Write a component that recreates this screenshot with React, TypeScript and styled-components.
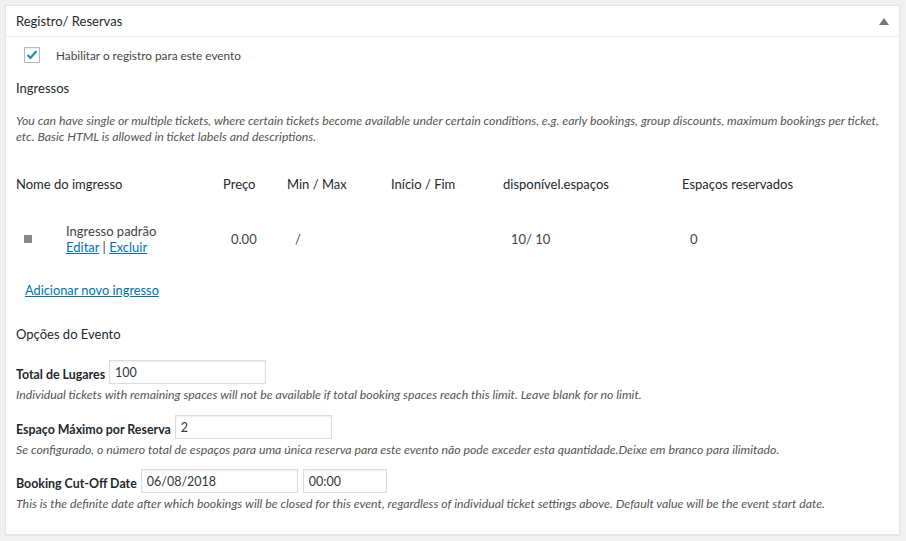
import React from 'react';
import styled, { createGlobalStyle } from 'styled-components';

const GlobalStyle = createGlobalStyle`
  html, body {
    margin: 0;
    padding: 0;
    background: #f1f1f1;
  }
  body {
    font-family: Lato, 'Liberation Sans', sans-serif;
    font-size: 13px;
    color: #444;
  }
`;

const Page = styled.div`
  padding: 5px 6px 8px 5px;
`;

const Postbox = styled.div`
  background: #fff;
  border: 1px solid #e5e5e5;
  box-shadow: 0 1px 1px rgba(0, 0, 0, 0.04);
`;

const PanelHeader = styled.div`
  height: 30px;
  display: flex;
  align-items: center;
  justify-content: space-between;
  padding: 0 10px;
  border-bottom: 1px solid #eee;
`;

const PanelTitle = styled.h2`
  margin: 0;
  font-size: 13px;
  font-weight: 400;
  color: #23282d;
`;

const Inside = styled.div`
  padding: 0 10px 22px;
`;

const CheckRow = styled.label`
  display: flex;
  align-items: center;
  margin: 10px 0 0 8px;
  height: 16px;
  font-size: 11.8px;
  color: #444;
`;

const CheckBox = styled.span`
  width: 14px;
  height: 14px;
  border: 1px solid #b4b9be;
  box-shadow: inset 0 1px 2px rgba(0, 0, 0, 0.1);
  display: flex;
  align-items: center;
  justify-content: center;
  margin-right: 16px;
`;

const SectionTitle = styled.h4<{ $top: number }>`
  margin: ${({ $top }) => $top}px 0 0;
  font-size: 13px;
  font-weight: 400;
  line-height: 20px;
  color: #23282d;
`;

const Note = styled.p<{ $top: number }>`
  margin: ${({ $top }) => $top}px 0 0;
  font-style: italic;
  font-size: 12.3px;
  line-height: 16px;
  color: #555;
`;

const TicketGrid = styled.div`
  display: grid;
  grid-template-columns: 207px 64px 104px 112px 179px 1fr;
  margin-top: 29px;
`;

const HeadCell = styled.div`
  line-height: 20px;
  color: #23282d;
  font-weight: 400;
`;

const Cell = styled.div`
  margin-top: 29px;
  padding-left: 8px;
  display: flex;
  align-items: center;
  min-height: 32px;
`;

const Swatch = styled.span`
  width: 8px;
  height: 8px;
  background: #888;
  margin-right: 34px;
  flex-shrink: 0;
`;

const TicketName = styled.div`
  line-height: 16px;
`;

const Link = styled.a`
  color: #0073aa;
  text-decoration: underline;
  cursor: pointer;
`;

const AddLink = styled(Link)`
  display: inline-block;
  margin: 26px 0 0 9px;
  font-size: 12.8px;
  line-height: 18px;
`;

const FieldRow = styled.div<{ $top: number }>`
  display: flex;
  align-items: flex-end;
  margin-top: ${({ $top }) => $top}px;
`;

const FieldLabel = styled.strong`
  line-height: 20px;
  font-size: 12.4px;
  color: #23282d;
  font-weight: 700;
  margin: 0 4px -1px 0;
`;

const TextInput = styled.input<{ $w: number }>`
  box-sizing: border-box;
  width: ${({ $w }) => $w}px;
  height: 24px;
  margin-right: 5px;
  padding: 0 5px;
  border: 1px solid #ddd;
  box-shadow: inset 0 1px 2px rgba(0, 0, 0, 0.07);
  font-family: inherit;
  font-size: 12.5px;
  color: #32373c;
  outline: none;
`;

const FieldNote = styled(Note)`
  margin-top: 3px;
`;

const columns = ['Nome do imgresso', 'Preço', 'Min / Max', 'Início / Fim', 'disponível.espaços', 'Espaços reservados'];

const App: React.FC = () => {
  return (
    <Page>
      <GlobalStyle />
      <Postbox>
        <PanelHeader>
          <PanelTitle>Registro/ Reservas</PanelTitle>
          <svg width="10" height="7" viewBox="0 0 10 7">
            <path d="M5 0 L10 7 L0 7 Z" fill="#72777c" />
          </svg>
        </PanelHeader>
        <Inside>
          <CheckRow>
            <CheckBox>
              <svg width="12" height="12" viewBox="0 0 12 12">
                <path d="M1.5 6 L4.5 9 L10.5 2" stroke="#1e8cbe" strokeWidth="2.2" fill="none" />
              </svg>
            </CheckBox>
            Habilitar o registro para este evento
          </CheckRow>

          <SectionTitle $top={15}>Ingressos</SectionTitle>
          <Note $top={15}>
            You can have single or multiple tickets, where certain tickets become available under certain conditions, e.g. early bookings, group discounts, maximum bookings per ticket, etc. Basic HTML is allowed in ticket labels and descriptions.
          </Note>

          <TicketGrid>
            {columns.map((c) => (
              <HeadCell key={c}>{c}</HeadCell>
            ))}
            <Cell>
              <Swatch />
              <TicketName>
                Ingresso padrão
                <br />
                <Link>Editar</Link> | <Link>Excluir</Link>
              </TicketName>
            </Cell>
            <Cell>0.00</Cell>
            <Cell>/</Cell>
            <Cell></Cell>
            <Cell>10/ 10</Cell>
            <Cell>0</Cell>
          </TicketGrid>

          <AddLink>Adicionar novo ingresso</AddLink>

          <SectionTitle $top={25}>Opções do Evento</SectionTitle>

          <FieldRow $top={16}>
            <FieldLabel>Total de Lugares</FieldLabel>
            <TextInput $w={157} defaultValue="100" />
          </FieldRow>
          <FieldNote $top={3}>
            Individual tickets with remaining spaces will not be available if total booking spaces reach this limit. Leave blank for no limit.
          </FieldNote>

          <FieldRow $top={12}>
            <FieldLabel>Espaço Máximo por Reserva</FieldLabel>
            <TextInput $w={157} defaultValue="2" />
          </FieldRow>
          <FieldNote $top={3}>
            Se configurado, o número total de espaços para uma única reserva para este evento não pode exceder esta quantidade.Deixe em branco para ilimitado.
          </FieldNote>

          <FieldRow $top={11}>
            <FieldLabel>Booking Cut-Off Date</FieldLabel>
            <TextInput $w={157} defaultValue="06/08/2018" />
            <TextInput $w={84} defaultValue="00:00" />
          </FieldRow>
          <FieldNote $top={3}>
            This is the definite date after which bookings will be closed for this event, regardless of individual ticket settings above. Default value will be the event start date.
          </FieldNote>
        </Inside>
      </Postbox>
    </Page>
  );
};

export default App;
